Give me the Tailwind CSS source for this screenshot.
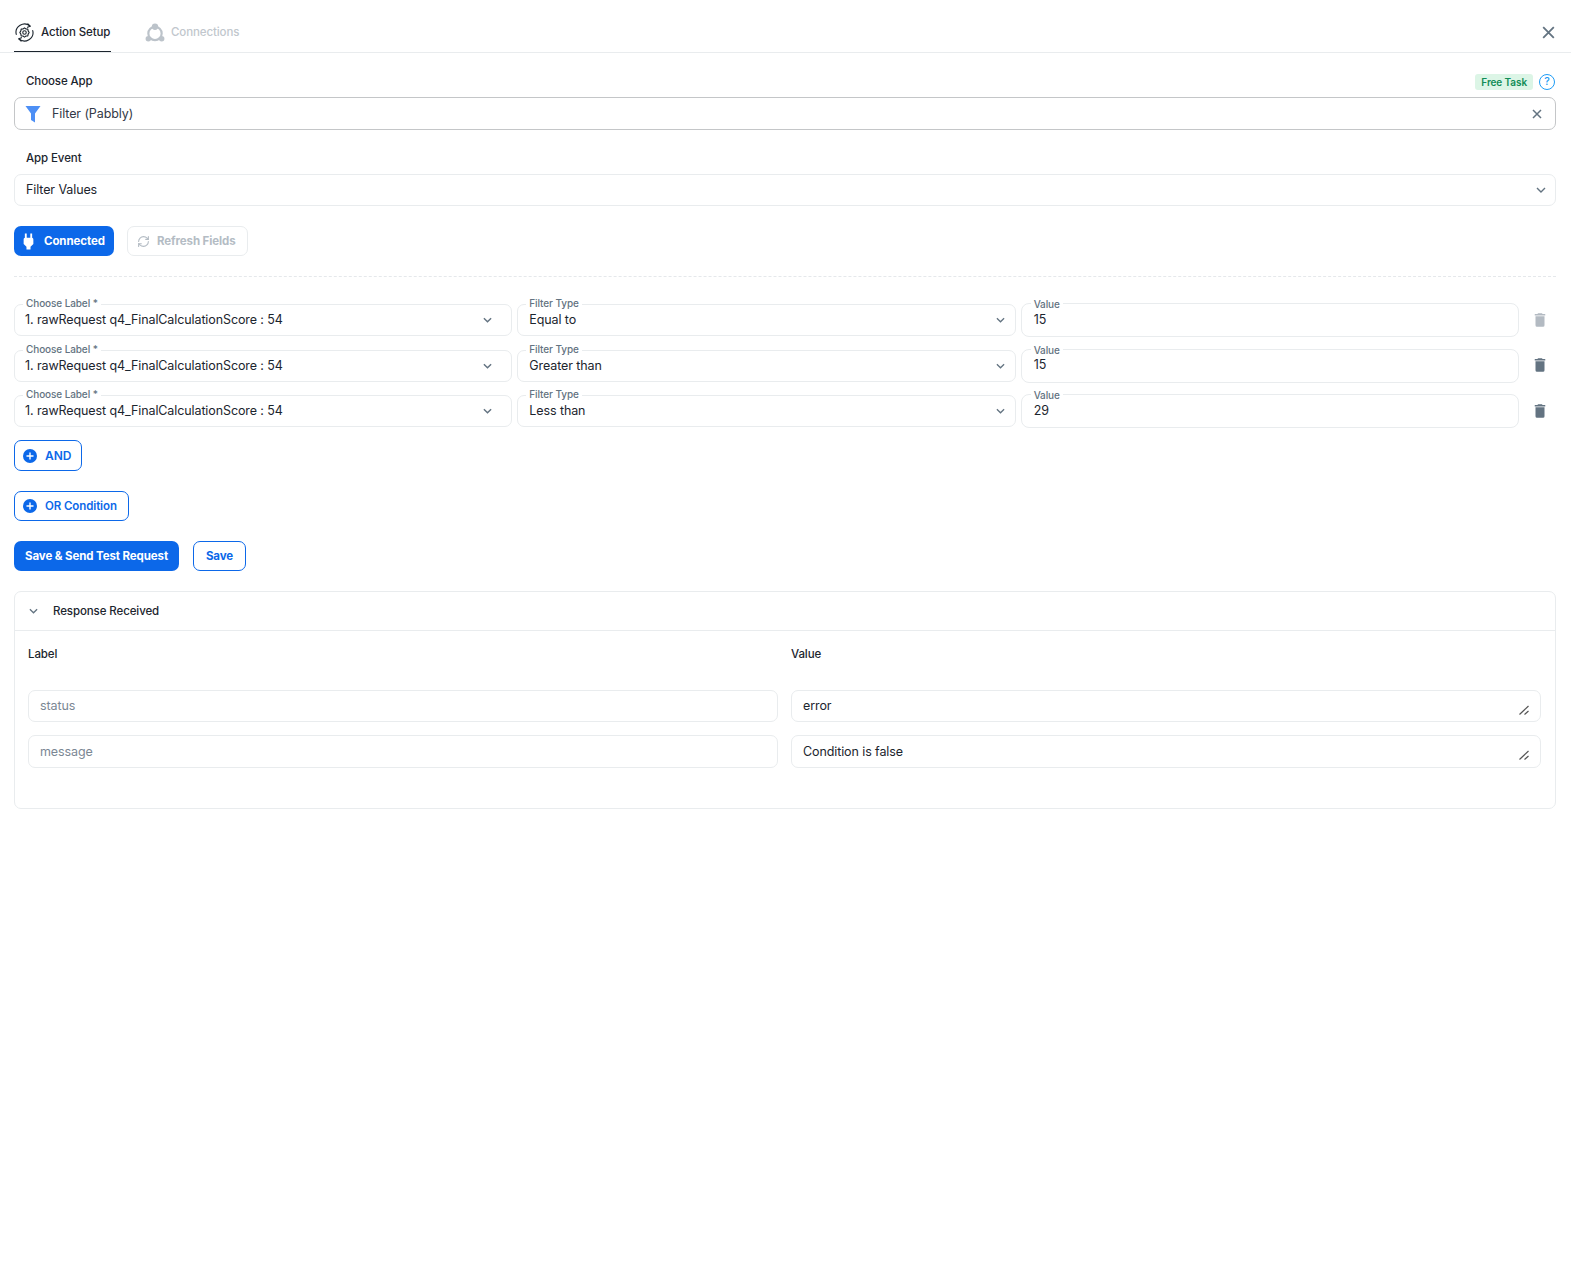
<!DOCTYPE html>
<html lang="en">
<head>
  <meta charset="UTF-8" />
  <title>Action Setup</title>
  <script src="https://cdn.jsdelivr.net/npm/@tailwindcss/browser@4"></script>
</head>
<body class="bg-white text-[#1c252e] font-['Inter','Liberation_Sans',sans-serif] text-[12.5px] tracking-[-0.1px]">

  <!-- Tabs -->
  <div class="flex items-center justify-between h-[53px] pt-[14px] border-b border-[#e9ecee] pl-[14px] pr-[14px]">
    <div class="flex h-full">
      <div class="flex items-center gap-[7px] w-[97px] h-full border-b-[1px] border-[#1c252e] text-[11.5px] font-medium whitespace-nowrap">
        <svg class="w-[19px] h-[19px] ml-px" viewBox="0 0 24 24" fill="none" stroke="#1c252e" stroke-width="1.400" stroke-linecap="round" stroke-linejoin="round">
          <path d="M1.600 14.500A10.700 10.700 0 0 1 19 3.900"/><path d="M16.300 1.200l2.900 2.800-3.400 1.500"/>
          <path d="M22.400 9.500A10.700 10.700 0 0 1 5 20.100"/><path d="M7.700 22.800l-2.900-2.800 3.400-1.500"/>
          <path d="M12 6.200l1.900 1.300 2.300.2.400 2.300 1.300 2-1.300 2-.4 2.300-2.300.2-1.900 1.300-1.900-1.300-2.300-.2-.4-2.300-1.300-2 1.300-2 .4-2.300 2.300-.2z"/>
          <circle cx="12" cy="12" r="2.200"/>
        </svg>
        <span>Action Setup</span>
      </div>
      <div class="flex items-center gap-[6px] ml-[34px] text-[11.5px] font-medium text-[#c1c7cd]">
        <svg class="w-[20px] h-[20px]" viewBox="0 0 24 24" fill="#bcc3ca" stroke="none">
          <circle cx="12" cy="12.500" r="8" fill="none" stroke="#bcc3ca" stroke-width="2.600"/>
          <circle cx="12" cy="4.500" r="3.800"/><circle cx="4" cy="19" r="3.300"/><circle cx="20" cy="19" r="3.300"/>
        </svg>
        <span>Connections</span>
      </div>
    </div>
    <svg class="w-[17px] h-[17px] -mt-[2px]" viewBox="0 0 16 16" fill="none" stroke="#637381" stroke-width="1.700"><path d="M3 3l10 10M13 3L3 13"/></svg>
  </div>

  <div class="pl-[14px] pr-[15px]">

    <!-- Choose App -->
    <div class="flex items-center justify-between mt-[20px] h-[17px] pl-[12px]">
      <span class="font-medium text-[11.5px] pt-[1px]">Choose App</span>
      <div class="flex items-center gap-[6px] pt-[1px] mr-px">
        <span class="bg-[#dcf5e6] text-[#118d57] rounded-[3px] text-[10px] font-semibold px-[6px] h-[16px] leading-[16px]">Free Task</span>
        <span class="flex items-center justify-center w-[16px] h-[16px] rounded-full border-[1.5px] border-[#1e9cf5] text-[#1e9cf5] text-[10.500px] font-medium leading-none">?</span>
      </div>
    </div>
    <div class="flex items-center justify-between h-[33px] mt-[7px] border border-[#c4c6c8] rounded-[7px] pl-[10px] pr-[12px]">
      <div class="flex items-center gap-[11px]">
        <svg class="w-[16px] h-[18px]" viewBox="0 0 16 18" fill="#4d8ff5"><path d="M0.500 1h15L10 8.500V17.500L6 15V8.500z"/></svg>
        <span class="text-[#333a47] pt-[2px]">Filter (Pabbly)</span>
      </div>
      <svg class="w-[12px] h-[12px]" viewBox="0 0 12 12" fill="none" stroke="#637381" stroke-width="1.500"><path d="M2 2l8 8M10 2l-8 8"/></svg>
    </div>

    <!-- App Event -->
    <div class="mt-[20px] h-[17px] pl-[12px] font-medium text-[11.5px]">App Event</div>
    <div class="flex items-center justify-between h-[32px] mt-[7px] border border-[#e9ecee] rounded-[7px] pl-[11px] pr-[9px]">
      <span>Filter Values</span>
      <svg class="w-[10px] h-[6px]" viewBox="0 0 10 6" fill="none" stroke="#637381" stroke-width="1.400"><path d="M1 1l4 4 4-4"/></svg>
    </div>

    <!-- Connection buttons -->
    <div class="flex gap-[13px] mt-[20px]">
      <button class="flex items-center gap-[8px] h-[30px] w-[100px] pl-[7px] rounded-[7px] bg-[#0c68e9] text-white text-[11.5px] font-bold">
        <svg class="w-[15px] h-[17px]" viewBox="5 1 14 21" fill="#fff"><path d="M16.500 7V1.500h-2.300V7H9.800V1.500H7.500V7C6.800 7 6 8 6 9v5.500L9.500 18v3.500h5V18l3.500-3.500V9c0-1-.8-2-1.500-2z"/></svg>
        <span class="pt-[2px]">Connected</span>
      </button>
      <button class="flex items-center gap-[7px] h-[30px] w-[121px] pl-[9px] rounded-[7px] border border-[#e9ecee] text-[#b4bcc4] text-[11.5px] font-bold">
        <svg class="w-[13px] h-[13px]" viewBox="0 0 24 24" fill="none" stroke="#b4bcc4" stroke-width="2" stroke-linecap="round" stroke-linejoin="round"><path d="M3 12a9 9 0 0 1 9-9 9.750 9.750 0 0 1 6.740 2.740L21 8"/><path d="M21 3v5h-5"/><path d="M21 12a9 9 0 0 1-9 9 9.750 9.750 0 0 1-6.740-2.740L3 16"/><path d="M8 16H3v5"/></svg>
        <span class="pt-[2px]">Refresh Fields</span>
      </button>
    </div>

    <div class="mt-[20px] border-t border-dashed border-[#e5e8eb]"></div>

    <!-- Filter rows -->
    <div class="flex flex-col gap-[11.5px] mt-[26px]">

      <div class="flex items-center">
        <div class="grid grid-cols-3 gap-[5px] w-[1505px] items-center">
          <div class="relative flex items-center justify-between h-[32px] border border-[#e9ecee] rounded-[7px] pl-[10px] pr-[19px]">
            <span class="absolute -top-[8px] left-[8px] bg-white px-[3px] text-[10px] leading-[12px] font-medium text-[#637381]">Choose Label *</span>
            <span class="pt-[1px]">1. rawRequest q4_FinalCalculationScore : 54</span>
            <svg class="w-[9px] h-[6px]" viewBox="0 0 10 6" fill="none" stroke="#637381" stroke-width="1.600"><path d="M1 1l4 4 4-4"/></svg>
          </div>
          <div class="relative flex items-center justify-between h-[32px] border border-[#e9ecee] rounded-[7px] pl-[11px] pr-[10px]">
            <span class="absolute -top-[8px] left-[8px] bg-white px-[3px] text-[10px] leading-[12px] font-medium text-[#637381]">Filter Type</span>
            <span class="pt-[1px]">Equal to</span>
            <svg class="w-[9px] h-[6px]" viewBox="0 0 10 6" fill="none" stroke="#637381" stroke-width="1.400"><path d="M1 1l4 4 4-4"/></svg>
          </div>
          <div class="relative flex items-center h-[34px] border border-[#e9ecee] rounded-[8px] pl-[12px]">
            <span class="absolute -top-[6px] left-[9px] bg-white px-[3px] text-[10px] leading-[12px] font-medium text-[#637381]">Value</span>
            <span>15</span>
          </div>
        </div>
        <svg class="w-[18px] h-[18px] ml-[12px] -mt-px" viewBox="0 0 24 24" fill="#b3bac2"><path d="M19 4h-3.500l-1-1h-5l-1 1H5v2h14zM6 19a2 2 0 0 0 2 2h8a2 2 0 0 0 2-2V7H6z"/></svg>
      </div>

      <div class="flex items-center">
        <div class="grid grid-cols-3 gap-[5px] w-[1505px] items-center">
          <div class="relative flex items-center justify-between h-[32px] border border-[#e9ecee] rounded-[7px] pl-[10px] pr-[19px]">
            <span class="absolute -top-[8px] left-[8px] bg-white px-[3px] text-[10px] leading-[12px] font-medium text-[#637381]">Choose Label *</span>
            <span class="pt-[1px]">1. rawRequest q4_FinalCalculationScore : 54</span>
            <svg class="w-[9px] h-[6px]" viewBox="0 0 10 6" fill="none" stroke="#637381" stroke-width="1.600"><path d="M1 1l4 4 4-4"/></svg>
          </div>
          <div class="relative flex items-center justify-between h-[32px] border border-[#e9ecee] rounded-[7px] pl-[11px] pr-[10px]">
            <span class="absolute -top-[8px] left-[8px] bg-white px-[3px] text-[10px] leading-[12px] font-medium text-[#637381]">Filter Type</span>
            <span class="pt-[1px]">Greater than</span>
            <svg class="w-[9px] h-[6px]" viewBox="0 0 10 6" fill="none" stroke="#637381" stroke-width="1.400"><path d="M1 1l4 4 4-4"/></svg>
          </div>
          <div class="relative flex items-center h-[34px] border border-[#e9ecee] rounded-[8px] pl-[12px]">
            <span class="absolute -top-[6px] left-[9px] bg-white px-[3px] text-[10px] leading-[12px] font-medium text-[#637381]">Value</span>
            <span>15</span>
          </div>
        </div>
        <svg class="w-[18px] h-[18px] ml-[12px] -mt-px" viewBox="0 0 24 24" fill="#637381"><path d="M19 4h-3.500l-1-1h-5l-1 1H5v2h14zM6 19a2 2 0 0 0 2 2h8a2 2 0 0 0 2-2V7H6z"/></svg>
      </div>

      <div class="flex items-center">
        <div class="grid grid-cols-3 gap-[5px] w-[1505px] items-center">
          <div class="relative flex items-center justify-between h-[32px] border border-[#e9ecee] rounded-[7px] pl-[10px] pr-[19px]">
            <span class="absolute -top-[8px] left-[8px] bg-white px-[3px] text-[10px] leading-[12px] font-medium text-[#637381]">Choose Label *</span>
            <span class="pt-[1px]">1. rawRequest q4_FinalCalculationScore : 54</span>
            <svg class="w-[9px] h-[6px]" viewBox="0 0 10 6" fill="none" stroke="#637381" stroke-width="1.600"><path d="M1 1l4 4 4-4"/></svg>
          </div>
          <div class="relative flex items-center justify-between h-[32px] border border-[#e9ecee] rounded-[7px] pl-[11px] pr-[10px]">
            <span class="absolute -top-[8px] left-[8px] bg-white px-[3px] text-[10px] leading-[12px] font-medium text-[#637381]">Filter Type</span>
            <span class="pt-[1px]">Less than</span>
            <svg class="w-[9px] h-[6px]" viewBox="0 0 10 6" fill="none" stroke="#637381" stroke-width="1.400"><path d="M1 1l4 4 4-4"/></svg>
          </div>
          <div class="relative flex items-center h-[34px] border border-[#e9ecee] rounded-[8px] pl-[12px]">
            <span class="absolute -top-[6px] left-[9px] bg-white px-[3px] text-[10px] leading-[12px] font-medium text-[#637381]">Value</span>
            <span>29</span>
          </div>
        </div>
        <svg class="w-[18px] h-[18px] ml-[12px] -mt-px" viewBox="0 0 24 24" fill="#637381"><path d="M19 4h-3.500l-1-1h-5l-1 1H5v2h14zM6 19a2 2 0 0 0 2 2h8a2 2 0 0 0 2-2V7H6z"/></svg>
      </div>
    </div>

    <!-- Conditions -->
    <button class="flex items-center gap-[8px] h-[31px] w-[68px] pl-[8px] mt-[12px] rounded-[7px] border border-[#0c68e9] text-[#0c68e9] text-[12px] font-semibold">
      <svg class="w-[14px] h-[14px]" viewBox="0 0 14 14"><circle cx="7" cy="7" r="7" fill="#0c68e9"/><path d="M7 3.500v7M3.500 7h7" stroke="#fff" stroke-width="1.400"/></svg>
      AND
    </button>
    <button class="flex items-center gap-[8px] h-[30px] w-[115px] pl-[8px] mt-[20px] rounded-[7px] border border-[#0c68e9] text-[#0c68e9] text-[11.5px] font-semibold">
      <svg class="w-[14px] h-[14px]" viewBox="0 0 14 14"><circle cx="7" cy="7" r="7" fill="#0c68e9"/><path d="M7 3.500v7M3.500 7h7" stroke="#fff" stroke-width="1.400"/></svg>
      <span class="pt-[2px]">OR Condition</span>
    </button>

    <div class="flex gap-[14px] mt-[20px]">
      <button class="h-[30px] w-[165px] pt-[2px] rounded-[7px] bg-[#0c68e9] text-white text-[11.5px] font-bold">Save &amp; Send Test Request</button>
      <button class="h-[30px] w-[53px] pt-[2px] rounded-[7px] border border-[#0c68e9] text-[#0c68e9] text-[11.5px] font-bold">Save</button>
    </div>

    <!-- Response -->
    <div class="mt-[20px] h-[218px] border border-[#e9ecee] rounded-[7px]">
      <div class="flex items-center h-[39px] border-b border-[#e9ecee] pl-[14px] gap-[15px]">
        <svg class="w-[9px] h-[6px]" viewBox="0 0 10 6" fill="none" stroke="#637381" stroke-width="1.400"><path d="M1 1l4 4 4-4"/></svg>
        <span class="font-medium text-[11.5px] pt-[2px]">Response Received</span>
      </div>
      <div class="grid grid-cols-2 gap-x-[13px] pl-[13px] pr-[14px]">
        <div class="mt-[15px] h-[16px] font-medium text-[11.5px]">Label</div>
        <div class="mt-[15px] h-[16px] font-medium text-[11.5px]">Value</div>

        <div class="flex items-center h-[32px] mt-[28px] border border-[#e9ecee] rounded-[7px] pl-[11px] text-[#7b8794]">status</div>
        <div class="flex items-center justify-between h-[32px] mt-[28px] border border-[#e9ecee] rounded-[7px] pl-[11px] pr-[11px]">
          <span>error</span>
          <svg class="w-[10px] h-[10px] self-start mt-[14px]" viewBox="0 0 10 10" fill="none" stroke="#555" stroke-width="1.200"><path d="M0.500 9.500l9-8.500M5.500 9.500l4-3.500"/></svg>
        </div>

        <div class="flex items-center h-[33px] mt-[13px] pt-[1px] border border-[#e9ecee] rounded-[7px] pl-[11px] text-[#7b8794]">message</div>
        <div class="flex items-center justify-between h-[33px] mt-[13px] border border-[#e9ecee] rounded-[7px] pl-[11px] pr-[11px]">
          <span class="pt-[2px]">Condition is false</span>
          <svg class="w-[10px] h-[10px] self-start mt-[14px]" viewBox="0 0 10 10" fill="none" stroke="#555" stroke-width="1.200"><path d="M0.500 9.500l9-8.500M5.500 9.500l4-3.500"/></svg>
        </div>
      </div>
    </div>
  </div>

</body>
</html>
